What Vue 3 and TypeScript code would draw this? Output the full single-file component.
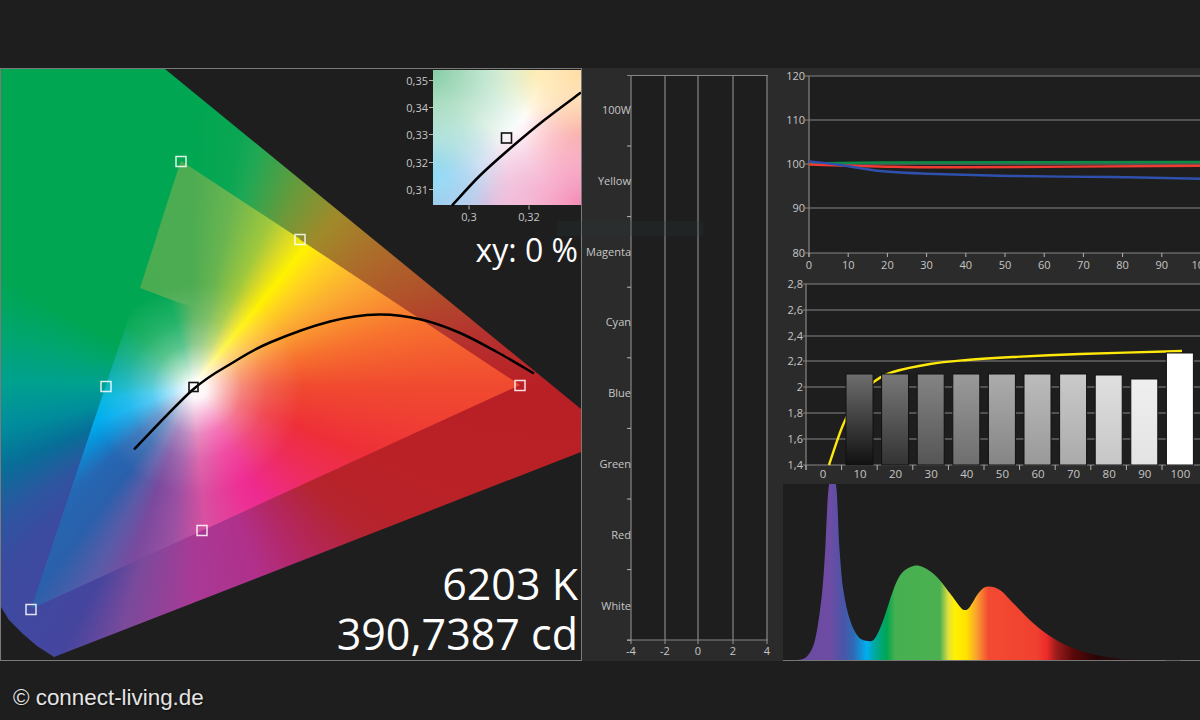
<script setup lang="ts">
type Pt = [number, number]

// smooth path through measured points (catmull-rom to bezier)
const smooth = (pts: Pt[]): string => {
  let d = `M${pts[0][0]} ${pts[0][1]}`
  for (let i = 0; i < pts.length - 1; i++) {
    const p0 = pts[Math.max(i - 1, 0)]
    const p1 = pts[i]
    const p2 = pts[i + 1]
    const p3 = pts[Math.min(i + 2, pts.length - 1)]
    const c1x = p1[0] + (p2[0] - p0[0]) / 6
    const c1y = p1[1] + (p2[1] - p0[1]) / 6
    const c2x = p2[0] - (p3[0] - p1[0]) / 6
    const c2y = p2[1] - (p3[1] - p1[1]) / 6
    d += ` C${c1x.toFixed(1)} ${c1y.toFixed(1)} ${c2x.toFixed(1)} ${c2y.toFixed(1)} ${p2[0]} ${p2[1]}`
  }
  return d
}

// CIE diagram
const locus = smooth([[134, 449], [193, 389], [233, 362], [270, 342], [330, 321], [379, 314], [421, 319], [459, 332], [497, 351.5], [534, 373]])
const insetLocus = smooth([[452, 205], [480, 175], [510, 148], [545, 119], [581, 92]])
const gamutMarkers = [
  { x: 181, y: 161 },
  { x: 300, y: 239 },
  { x: 106, y: 386 },
  { x: 520, y: 385 },
  { x: 202, y: 530 },
  { x: 31, y: 609 },
]
const insetY = [
  { label: '0,35', y: 84 },
  { label: '0,34', y: 111 },
  { label: '0,33', y: 138 },
  { label: '0,32', y: 166 },
  { label: '0,31', y: 193 },
]
const insetX = [
  { label: '0,3', x: 469 },
  { label: '0,32', x: 529 },
]

// colour error bars
const errorRows = ['100W', 'Yellow', 'Magenta', 'Cyan', 'Blue', 'Green', 'Red', 'White']
const errorGrid = [
  { label: '-4', x: 631 },
  { label: '-2', x: 665 },
  { label: '0', x: 698 },
  { label: '2', x: 733 },
  { label: '4', x: 767 },
]

// rgb balance
const balanceY = [
  { label: '120', y: 76 },
  { label: '110', y: 120 },
  { label: '100', y: 164 },
  { label: '90', y: 208 },
  { label: '80', y: 253 },
]
const balanceX = Array.from({ length: 11 }, (_, i) => ({ label: String(i * 10), x: 809 + i * 39.2 }))
const greenLine = smooth([[809, 164], [880, 162.5], [1200, 162]])
const redLine = smooth([[809, 164.5], [880, 166.5], [960, 167.3], [1200, 165.7]])
const blueLine = smooth([[809, 161.5], [840, 165], [880, 171], [927, 173.7], [1013, 176], [1113, 177], [1200, 178.7]])

// gamma
const gammaY = [
  { label: '2,8', y: 284 },
  { label: '2,6', y: 310 },
  { label: '2,4', y: 336 },
  { label: '2,2', y: 361 },
  { label: '2', y: 387 },
  { label: '1,8', y: 413 },
  { label: '1,6', y: 439 },
  { label: '1,4', y: 465 },
]
const gammaCurve = smooth([[829, 465], [843, 425], [858, 398], [875, 381], [893, 372], [930, 364], [967, 360], [1013, 357], [1080, 354], [1182, 351]])
const gammaBars = [
  { label: '10', top: 374, from: '#6e6e6e', to: '#111111' },
  { label: '20', top: 374, from: '#787878', to: '#333333' },
  { label: '30', top: 374, from: '#848484', to: '#555555' },
  { label: '40', top: 374, from: '#9a9a9a', to: '#6e6e6e' },
  { label: '50', top: 374, from: '#acacac', to: '#858585' },
  { label: '60', top: 374, from: '#bcbcbc', to: '#999999' },
  { label: '70', top: 374, from: '#cacaca', to: '#aaaaaa' },
  { label: '80', top: 375, from: '#e0e0e0', to: '#c6c6c6' },
  { label: '90', top: 379, from: '#efefef', to: '#e3e3e3' },
  { label: '100', top: 353, from: '#ffffff', to: '#ffffff' },
].map((b, i) => ({ ...b, id: `bar${i}`, x: 846 + i * 35.6 }))
const gammaTicks = Array.from({ length: 11 }, (_, i) => 806 + i * 35.6)

// spectrum, points measured from the 3x crop
const specRaw: Pt[] = [[50, 540], [80, 530], [105, 480], [125, 350], [135, 220], [147, 15], [168, 15], [178, 200], [190, 330], [210, 420], [235, 470], [265, 483], [285, 475], [310, 420], [340, 330], [365, 280], [400, 258], [430, 262], [470, 290], [510, 340], [540, 380], [555, 390], [570, 380], [595, 340], [620, 320], [660, 330], [700, 370], [760, 430], [820, 475], [880, 505], [950, 525], [1050, 538], [1200, 541]]
const specPts = specRaw.map(([x, y]): Pt => [780 + x / 3, 480 + y / 3])
const specArea = `${smooth(specPts)} L1180 660 L796 660 Z`
const specStops: [number, string][] = [
  [50, '#6a4aa0'], [150, '#6e4ca4'], [190, '#4a55a8'], [220, '#2f6ab4'], [260, '#00aeef'], [285, '#00a99d'],
  [320, '#00a651'], [345, '#46b050'], [480, '#4cb050'], [505, '#e0e040'], [525, '#fff200'], [560, '#ffe000'],
  [590, '#f9a030'], [625, '#f44a32'], [770, '#f0402f'], [800, '#ee2a2a'], [830, '#9a1c1c'], [880, '#5a0808'],
  [950, '#2a0505'], [1100, '#1e1e1e'],
]
</script>

<template>
  <div class="page">
    <div class="top-gap"></div>
    <div class="main">
      <!-- chromaticity diagram -->
      <section class="diagram">
        <div class="gamut gamut-outer"></div>
        <div class="gamut gamut-inner"></div>
        <div class="gamut gamut-patch"></div>
        <div class="gamut gamut-glow"></div>
        <div class="inset"></div>
        <svg class="overlay" viewBox="1 69 580 590">
          <path :d="locus" class="curve" />
          <rect
            v-for="m in gamutMarkers"
            :key="m.x"
            :x="m.x - 5"
            :y="m.y - 5"
            width="10"
            height="10"
            class="marker"
          />
          <rect x="189" y="382" width="9" height="9" class="marker marker--dark" />
          <path :d="insetLocus" class="curve" />
          <rect x="501.500" y="132.500" width="10" height="10" class="marker marker--dark" />
          <g v-for="t in insetY" :key="t.label">
            <text :x="428" :y="t.y" text-anchor="end" class="tick-label">{{ t.label }}</text>
            <line x1="429" x2="433" :y1="t.y - 4" :y2="t.y - 4" class="tick" />
          </g>
          <g v-for="t in insetX" :key="t.label">
            <text :x="t.x" y="220" text-anchor="middle" class="tick-label">{{ t.label }}</text>
            <line :x1="t.x" :x2="t.x" y1="205" y2="209" class="tick" />
          </g>
        </svg>
        <div class="xy-value">xy: 0 %</div>
        <div class="readout">
          <div>6203 K</div>
          <div>390,7387 cd</div>
        </div>
      </section>

      <!-- colour error -->
      <section class="errors">
        <svg class="chart" viewBox="582 68 196 593">
          <rect x="631" y="75" width="136" height="565" class="plot" />
          <line
            v-for="g in errorGrid"
            :key="g.x"
            :x1="g.x"
            :x2="g.x"
            y1="75"
            y2="644"
            class="grid"
          />
          <line x1="627" x2="768" y1="75.500" y2="75.500" class="grid" />
          <line x1="627" x2="768" y1="640" y2="640" class="grid" />
          <g v-for="(row, i) in errorRows" :key="row">
            <text x="631" :y="114 + i * 70.800" text-anchor="end" class="tick-label">{{ row }}</text>
            <line x1="627" x2="631" :y1="146 + i * 70.600" :y2="146 + i * 70.600" class="tick" />
          </g>
          <text
            v-for="g in errorGrid"
            :key="g.label"
            :x="g.x"
            y="655"
            text-anchor="middle"
            class="tick-label"
          >{{ g.label }}</text>
        </svg>
      </section>

      <div class="charts">
        <!-- rgb balance -->
        <section class="chart-panel chart-panel--balance">
          <svg class="chart" viewBox="778 68 422 208">
            <rect x="809" y="76" width="391" height="177" class="plot" />
            <line
              v-for="t in balanceY"
              :key="t.label"
              x1="805"
              x2="1200"
              :y1="t.y"
              :y2="t.y"
              class="grid"
            />
            <line x1="809" x2="809" y1="76" y2="257" class="grid" />
            <text
              v-for="t in balanceY"
              :key="t.label"
              x="805"
              :y="t.y + 4"
              text-anchor="end"
              class="tick-label"
            >{{ t.label }}</text>
            <g v-for="t in balanceX" :key="t.label">
              <line :x1="t.x" :x2="t.x" y1="253" y2="257" class="tick" />
              <text :x="t.x" y="269" text-anchor="middle" class="tick-label">{{ t.label }}</text>
            </g>
            <path :d="greenLine" class="trace trace--green" />
            <path :d="redLine" class="trace trace--red" />
            <path :d="blueLine" class="trace trace--blue" />
          </svg>
        </section>

        <!-- gamma -->
        <section class="chart-panel chart-panel--gamma">
          <svg class="chart" viewBox="778 276 422 208">
            <defs>
              <linearGradient v-for="b in gammaBars" :id="b.id" :key="b.id" x1="0" x2="0" y1="0" y2="1">
                <stop offset="0" :stop-color="b.from" />
                <stop offset="1" :stop-color="b.to" />
              </linearGradient>
            </defs>
            <rect x="806" y="284" width="394" height="181" class="plot" />
            <line
              v-for="t in gammaY"
              :key="t.label"
              x1="803"
              x2="1200"
              :y1="t.y"
              :y2="t.y"
              class="grid"
            />
            <line x1="806" x2="806" y1="284" y2="470" class="grid" />
            <text
              v-for="t in gammaY"
              :key="t.label"
              x="803"
              :y="t.y + 4"
              text-anchor="end"
              class="tick-label"
            >{{ t.label }}</text>
            <line
              v-for="x in gammaTicks"
              :key="x"
              :x1="x"
              :x2="x"
              y1="465"
              y2="470"
              class="tick"
            />
            <path :d="gammaCurve" class="trace trace--yellow" />
            <g v-for="b in gammaBars" :key="b.id">
              <rect :x="b.x" :y="b.top" width="27" :height="465 - b.top" :fill="`url(#${b.id})`" class="bar" />
              <text :x="b.x + 14" y="478" text-anchor="middle" class="tick-label tick-label--bar">{{ b.label }}</text>
            </g>
            <text x="823" y="478" text-anchor="middle" class="tick-label tick-label--bar">0</text>
          </svg>
        </section>

        <!-- spectrum -->
        <section class="spectrum">
          <svg class="chart" viewBox="778 484 422 177">
            <defs>
              <linearGradient id="spec" gradientUnits="userSpaceOnUse" x1="780" x2="1200" y1="0" y2="0">
                <stop
                  v-for="[x, c] in specStops"
                  :key="x"
                  :offset="x / 1260"
                  :stop-color="c"
                />
              </linearGradient>
            </defs>
            <rect x="783" y="484" width="417" height="177" class="plot" />
            <line x1="783" x2="1200" y1="660.500" y2="660.500" class="base" />
            <path :d="specArea" fill="url(#spec)" />
          </svg>
        </section>
      </div>
    </div>
    <footer class="credit">© connect-living.de</footer>
    <div class="ghost-band"></div>
  </div>
</template>

<style>
html,
body {
  margin: 0;
  background: #1e1e1e;
}
</style>

<style scoped>
.page {
  position: relative;
  width: 1200px;
  height: 720px;
  display: flex;
  flex-direction: column;
  overflow: hidden;
  background: #1e1e1e;
  font-family: "Open Sans", "Liberation Sans", sans-serif;
}

.top-gap {
  height: 68px;
}

.main {
  display: flex;
  height: 593px;
}

/* Diagram */
.diagram {
  position: relative;
  width: 582px;
  box-sizing: border-box;
  border: 1px solid #7a7a7a;
  background: #1e1e1e;
}

.gamut {
  position: absolute;
  inset: 0;
}

.gamut-outer {
  clip-path: polygon(0 0, 164px 0, 580px 340px, 580px 383px, 53px 588px, 36px 577px, 22px 565px, 8px 551px, 0 538px);
  background: conic-gradient(at 192px 317px,
    #00a651 0deg, #0aa653 10deg, #1fa855 15deg, #6a9a3a 28deg, #a08a2a 40deg, #ad6a2a 55deg,
    #b0522a 67deg, #b5322f 80deg, #b92025 90deg, #b92228 120deg, #b5242e 130deg, #b3286a 150deg,
    #b0308a 161deg, #a83a96 180deg, #7b4a9b 196deg, #45459e 206deg, #3b4ba0 226deg, #2d55a0 235deg,
    #076f98 247deg, #008d9c 258deg, #00a08f 271deg, #00a570 285deg, #00a651 300deg, #00a651 360deg);
}

.gamut-inner {
  clip-path: polygon(180px 92px, 519px 316px, 30px 540px);
  background: conic-gradient(at 192px 317px,
    #4dac52 0deg, #6ab550 12deg, #a0c83c 25deg, #d8d828 32deg, #fff200 39deg, #ffd51f 46deg,
    #fbab33 58deg, #f7712e 75deg, #f04a30 90deg, #ee2f38 111deg, #ee2c60 130deg, #ee2a8f 149deg,
    #ed3095 156deg, #d850a0 175deg, #9a50a2 188deg, #7a4a9e 199deg, #5b5ba8 207deg, #2a60ab 217deg,
    #2568b4 229deg, #0a90d8 240deg, #00aeef 250deg, #00b4e0 262deg, #00b0c0 270deg, #00a99d 283deg,
    #00a87a 295deg, #00a651 315deg, #00a651 345deg, #4dac52 360deg);
}

.gamut-patch {
  clip-path: polygon(180px 92px, 139px 219px, 171px 231px, 196px 240px, 299px 170px);
  background: conic-gradient(at 192px 317px,
    #4dac52 0deg, #6ab550 12deg, #a0c83c 25deg, #d8d828 32deg, #fff200 39deg, #4dac52 41deg,
    #48ad52 320deg, #4dac52 360deg);
}

.gamut-glow {
  clip-path: polygon(180px 92px, 519px 316px, 30px 540px);
  background: radial-gradient(circle 105px at 196px 320px,
    #ffffff 0, rgba(255, 255, 255, 0.95) 10px, rgba(255, 255, 255, 0.68) 25px,
    rgba(255, 255, 255, 0.35) 45px, rgba(255, 255, 255, 0.14) 70px, rgba(255, 255, 255, 0) 105px);
}

.inset {
  position: absolute;
  left: 432px;
  top: 1px;
  width: 148px;
  height: 135px;
  background:
    radial-gradient(circle 105px at 0 0, #85cda5, rgba(133, 205, 165, 0)),
    radial-gradient(circle 70px at 100% 0, #ffdca0, rgba(255, 220, 160, 0)),
    radial-gradient(circle 50px at 68% 0, #fff6c0, rgba(255, 246, 192, 0)),
    radial-gradient(circle 105px at 100% 100%, #f48ab6, rgba(244, 138, 182, 0)),
    radial-gradient(circle 60px at 100% 45%, #fdc0a8, rgba(253, 192, 168, 0)),
    radial-gradient(circle 75px at 0 78%, #8fdcf5, rgba(143, 220, 245, 0)),
    radial-gradient(circle 60px at 0 100%, #b4b4e4, rgba(180, 180, 228, 0)),
    radial-gradient(circle 80px at 35% 100%, #e6c5e4, rgba(230, 197, 228, 0)),
    #ffffff;
}

.overlay {
  position: absolute;
  inset: 0;
  width: 100%;
  height: 100%;
}

.curve {
  fill: none;
  stroke: #000;
  stroke-width: 2.5;
}

.marker {
  fill: none;
  stroke: rgba(255, 255, 255, 0.85);
  stroke-width: 1.5;
}

.marker--dark {
  stroke: #111;
  stroke-width: 1.6;
}

.tick-label {
  font-size: 11px;
  fill: #c6c6c6;
}

.tick-label--bar {
  font-size: 11.500px;
}

.tick {
  stroke: #b5b5b5;
  stroke-width: 1;
}

.xy-value,
.readout {
  position: absolute;
  right: 3px;
  color: #fdfdfd;
  text-align: right;
  white-space: nowrap;
}

.xy-value {
  top: 159px;
  font-size: 32px;
  line-height: 44px;
}

.readout {
  bottom: 1px;
  font-size: 43px;
  line-height: 50px;
}

/* Charts */
.errors {
  width: 196px;
  background: #2b2b2b;
}

.charts {
  flex: 1;
  display: flex;
  flex-direction: column;
}

.chart-panel {
  height: 208px;
  background: #2b2b2b;
}

.spectrum {
  flex: 1;
  background: #2b2b2b;
}

.chart {
  display: block;
  width: 100%;
  height: 100%;
}

.plot {
  fill: #1e1e1e;
}

.grid {
  stroke: #868686;
  stroke-width: 1.2;
}

.trace {
  fill: none;
  stroke-width: 2.4;
}

.trace--green {
  stroke: #0b8c48;
}

.trace--red {
  stroke: #ef3b32;
}

.trace--blue {
  stroke: #2f50ad;
}

.trace--yellow {
  stroke: #ffe90a;
}

.bar {
  stroke: #111;
  stroke-width: 1;
}

.base {
  stroke: #777;
  stroke-width: 1;
}

.credit {
  padding: 24px 0 0 13px;
  font-family: "Liberation Sans", Arial, sans-serif;
  font-size: 22.400px;
  line-height: 26px;
  color: #e4e4e4;
  text-shadow: 1px 1px 2px rgba(0, 0, 0, 0.5);
}

.ghost-band {
  position: absolute;
  left: 557px;
  top: 221px;
  width: 146px;
  height: 15px;
  background: rgba(40, 60, 60, 0.22);
  pointer-events: none;
}
</style>
